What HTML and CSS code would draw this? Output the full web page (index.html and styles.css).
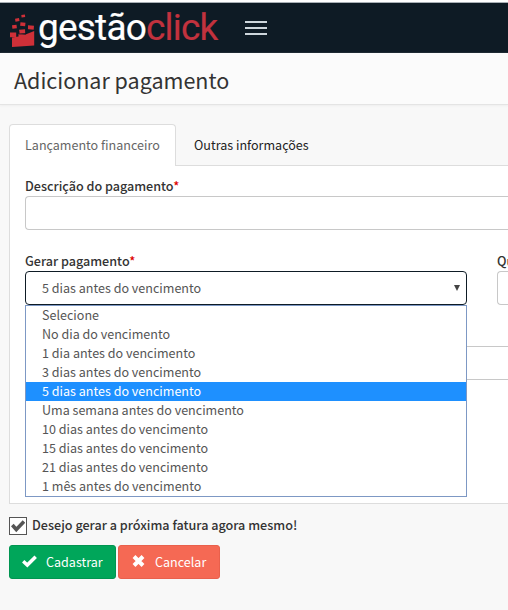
FILE: index.html
```html
<!DOCTYPE html>
<html lang="pt-BR">
<head>
<meta charset="utf-8">
<title>Adicionar pagamento</title>
<link rel="stylesheet" href="styles.css">
</head>
<body>
<nav class="navbar">
  <svg class="mark" width="26" height="34" viewBox="0 0 26 34" fill="#cf3038">
    <path d="M2 23.500L8.500 22.500V19.500L15.500 20.500L24.200 17V31.500L2 33Z"/>
    <path d="M0 18.500h6.200v4.800h-6.200zM9 15.800l6-.5.5 4-6 .5zM18 11.300l6 .5-.3 4-6-.5zM10.500 8.300l5 .5-.4 3.500-5-.5zM2 11.200l4.500-.5.4 3.500-4.500.5zM5 4.700l4-.7.5 3-4 .7zM11.300.9l3.600-.4.3 2.500-3.600.4z"/>
    <path d="M8.700 16.500V20H15.800V16M17.500 12V16.200L24.500 16.500" fill="none" stroke="#0e1b25" stroke-width=".8"/>
  </svg>
  <span class="brand">gestão<span class="brand-accent">click</span></span>
  <span class="burger"><i></i><i></i><i></i></span>
</nav>
<header class="page-header"><h1>Adicionar pagamento</h1></header>
<main class="content">
  <div class="tabs">
    <a class="tab active">Lançamento financeiro</a>
    <a class="tab">Outras informações</a>
  </div>
  <section class="panel">
    <div class="field wide first">
      <label>Descrição do pagamento<b>*</b></label>
      <div class="control open"></div>
    </div>
    <div class="row">
      <div class="field half">
        <label>Gerar pagamento<b>*</b></label>
        <div class="control select"><span>5 dias antes do vencimento</span><i class="caret"></i></div>
        <ul class="options">
          <li>Selecione</li>
          <li>No dia do vencimento</li>
          <li>1 dia antes do vencimento</li>
          <li>3 dias antes do vencimento</li>
          <li class="selected">5 dias antes do vencimento</li>
          <li>Uma semana antes do vencimento</li>
          <li>10 dias antes do vencimento</li>
          <li>15 dias antes do vencimento</li>
          <li>21 dias antes do vencimento</li>
          <li>1 mês antes do vencimento</li>
        </ul>
      </div>
      <div class="field rest">
        <label>Qu</label>
        <div class="control open"></div>
      </div>
    </div>
    <div class="field wide last"><div class="control open"></div></div>
  </section>
  <div class="check">
    <span class="box"><svg width="14" height="13" viewBox="0 0 14 13"><path d="M1.300 5L5.300 9.500L13 1.500" fill="none" stroke="#555" stroke-width="3.600"/></svg></span>
    <span class="check-label">Desejo gerar a próxima fatura agora mesmo!</span>
  </div>
  <div class="actions">
    <a class="btn save"><svg width="15" height="13" viewBox="0 0 15 13"><path d="M1.200 6.300L5.300 10L13.700 1.700" fill="none" stroke="#fff" stroke-width="3.500"/></svg>Cadastrar</a>
    <a class="btn cancel"><svg width="13" height="13" viewBox="0 0 13 13"><path d="M2 1.500L11 10.500M11 1.500L2 10.500" fill="none" stroke="#fff" stroke-width="4"/></svg>Cancelar</a>
  </div>
</main>
</body>
</html>
```
FILE: styles.css
```css
* { box-sizing: border-box; }
body {
  margin: 0;
  height: 610px;
  overflow: hidden;
  background: #f8f8f8;
  color: #333;
  font: 12.55px/19px "Noto Sans CJK SC", "Noto Sans", sans-serif;
}
.navbar {
  display: flex;
  height: 53px;
  padding: 11px 0 0 10px;
  background: linear-gradient(#fff 2px, #a9b0b6 2px, #a9b0b6 3px, #0e1b25 3px);
}
.mark { margin-top: 3px; }
.brand {
  width: 179px;
  margin-left: 2px;
  color: #fff;
  font: 37px/34px Roboto, sans-serif;
  letter-spacing: -0.8px;
  -webkit-text-stroke: 0.2px;
  white-space: nowrap;
}
.brand-accent { color: #c2323e; }
.burger { margin: 10px 0 0 28px; width: 22px; }
.burger i { display: block; height: 2px; margin-bottom: 4px; background: #cdd6dc; }
.page-header {
  height: 52px;
  padding: 12px 14px 0;
  background: #fbfbfb;
  border-bottom: 1px solid #e4e4e4;
  box-shadow: 0 1px 2px #eee;
}
h1 { margin: 0; font-size: 21.5px; line-height: 30px; font-weight: 400; }
.content { padding: 19px 0 0 9px; }
.tabs { display: flex; height: 42px; }
.tab { padding: 11px 18px; color: #222; white-space: nowrap; }
.tab.active {
  position: relative;
  z-index: 1;
  width: 167px;
  padding: 10px 15px;
  color: #666;
  background: #fff;
  border: 1px solid #ddd;
  border-bottom: 0;
  border-radius: 4px 4px 0 0;
}
.panel {
  height: 339px;
  margin-top: -1px;
  padding: 10px 0 0 15px;
  background: #fff;
  border: 1px solid #ddd;
  border-right: 0;
}
label { display: block; height: 20px; font-size: 12.6px; font-weight: 500; white-space: nowrap; }
label b { color: #d00; font-weight: 500; }
.control { height: 34px; background: #fff; border: 1px solid #c8c8c8; border-radius: 4px; }
.open { border-right: 0; border-radius: 4px 0 0 4px; }
.row { display: flex; gap: 30px; margin-top: 21px; }
.half { position: relative; width: 442px; flex: none; }
.rest { flex: 1; min-width: 0; }
.rest label { overflow: hidden; }
.last { margin-top: 41px; }
.select {
  display: flex;
  justify-content: space-between;
  padding: 6px 6px 0 16px;
  color: #555;
  border-color: #0e1b25;
}
.caret {
  width: 6px;
  height: 6px;
  margin-top: 7px;
  background: #444;
  clip-path: polygon(0 0, 100% 0, 50% 100%);
}
.options {
  position: absolute;
  z-index: 2;
  top: 54px;
  left: 0;
  width: 442px;
  margin: 0;
  padding: 0;
  list-style: none;
  background: #fff;
  border: 1px solid #7d98c4;
}
.options li { height: 19px; padding-left: 16px; color: #555; line-height: 18px; }
.options .selected { color: #fff; background: #1e90ff; }
.check { display: flex; height: 20px; margin-top: 12px; }
.box { width: 18px; height: 18px; margin-top: 1px; padding: 1px; background: #fff; border: 1px solid #555; }
.box svg { display: block; margin-top: 1px; }
.check-label { margin-left: 5px; font-size: 12.62px; font-weight: 500; line-height: 17px; }
.actions { display: flex; gap: 2px; margin-top: 9px; }
.btn {
  display: flex;
  align-items: center;
  height: 34px;
  padding: 0 0 1px 12px;
  color: #fff;
  border: 1px solid #009551;
  border-radius: 3px;
}
.save { width: 107px; background: #00a65a; }
.save svg { margin-right: 9px; }
.cancel { width: 102px; background: #f56954; border-color: #e9604c; }
.cancel svg { margin: 0 10px 0 1px; }
```
